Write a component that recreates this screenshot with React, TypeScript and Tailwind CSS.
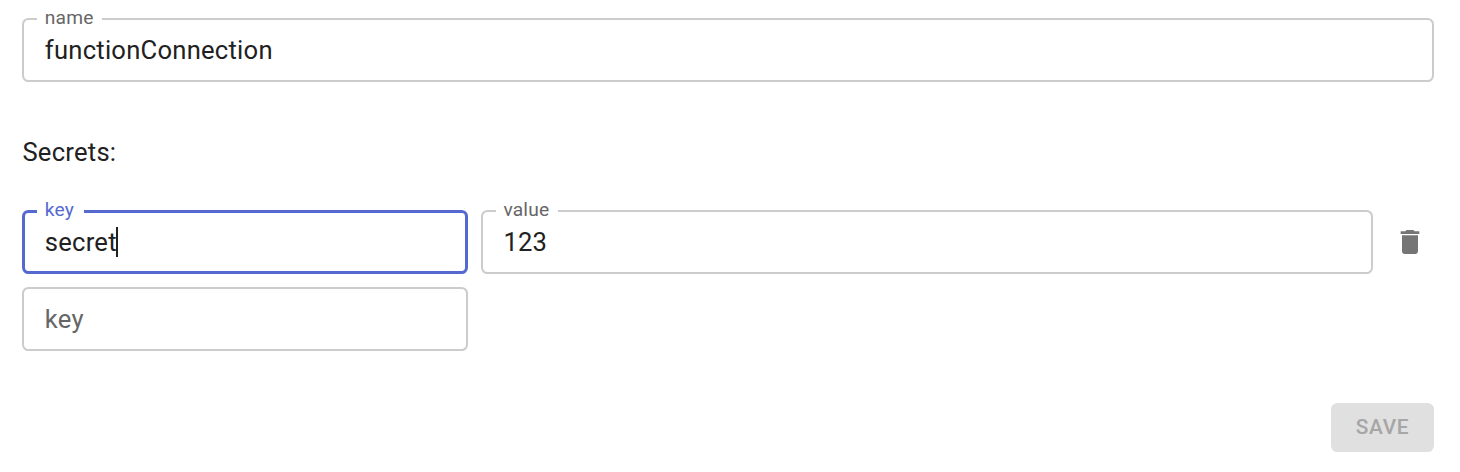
type FieldProps = {
  label: string;
  value?: string;
  focused?: boolean;
  className?: string;
  notch?: string;
};

function OutlinedField({ label, value, focused = false, className = "", notch = "" }: FieldProps) {
  return (
    <div
      className={`relative flex h-16 items-center rounded-[6.4px] ${
        focused ? "border-[3px] border-[#5569d0] pl-[19.4px]" : "border-2 border-[#cccccc] pl-[20.4px]"
      } ${className}`}
    >
      {value !== undefined && (
        <span
          className={`absolute flex h-[22px] items-center bg-white pl-[7.4px] text-[19.2px] tracking-[0.18px] ${notch} ${
            focused ? "-top-[14px] left-[12px] text-[#5569d0]" : "-top-[13px] left-[13px] text-[#666666]"
          }`}
        >
          {label}
        </span>
      )}
      <span className={value === undefined ? "text-[#666666]" : "text-[#212121]"}>{value ?? label}</span>
      {focused && <span className="-ml-[0.5px] h-[30px] w-[1.5px] bg-[#212121]" />}
    </div>
  );
}

function TrashIcon() {
  return (
    <svg viewBox="0 0 24 24" className="h-8 w-8" fill="#757575" aria-hidden="true">
      <path d="M6 19c0 1.100.9 2 2 2h8c1.100 0 2-.9 2-2V7H6v12zM19 4h-3.500l-1-1h-5l-1 1H5v2h14V4z" />
    </svg>
  );
}

export default function App() {
  return (
    <main className="flex h-[472px] w-[1460px] flex-col bg-white pt-[18px] pr-[26px] pl-[22.4px] font-[Roboto,sans-serif] text-[25.6px] leading-[38px] tracking-[0.24px] text-[#212121]">
      <OutlinedField label="name" value="functionConnection" notch="w-[65px]" className="w-[1411.5px]" />
      <h2 className="mt-[51px]">Secrets:</h2>
      <div className="mt-[39px] flex items-center">
        <OutlinedField label="key" value="secret" focused notch="w-[47px]" className="w-[445.6px]" />
        <OutlinedField label="value" value="123" notch="w-[62px]" className="ml-[13px] w-[892px]" />
        <button aria-label="Delete secret" className="ml-[21px] flex h-8 w-8 items-center justify-center">
          <TrashIcon />
        </button>
      </div>
      <OutlinedField label="key" className="mt-[13px] w-[445.6px]" />
      <button
        disabled
        className="mt-[52px] h-[49px] w-[103px] self-end rounded-[6.4px] bg-[#e0e0e0] pb-[2px] text-[20.8px] font-medium tracking-[0.7px] text-[#a6a6a6]"
      >
        SAVE
      </button>
    </main>
  );
}
